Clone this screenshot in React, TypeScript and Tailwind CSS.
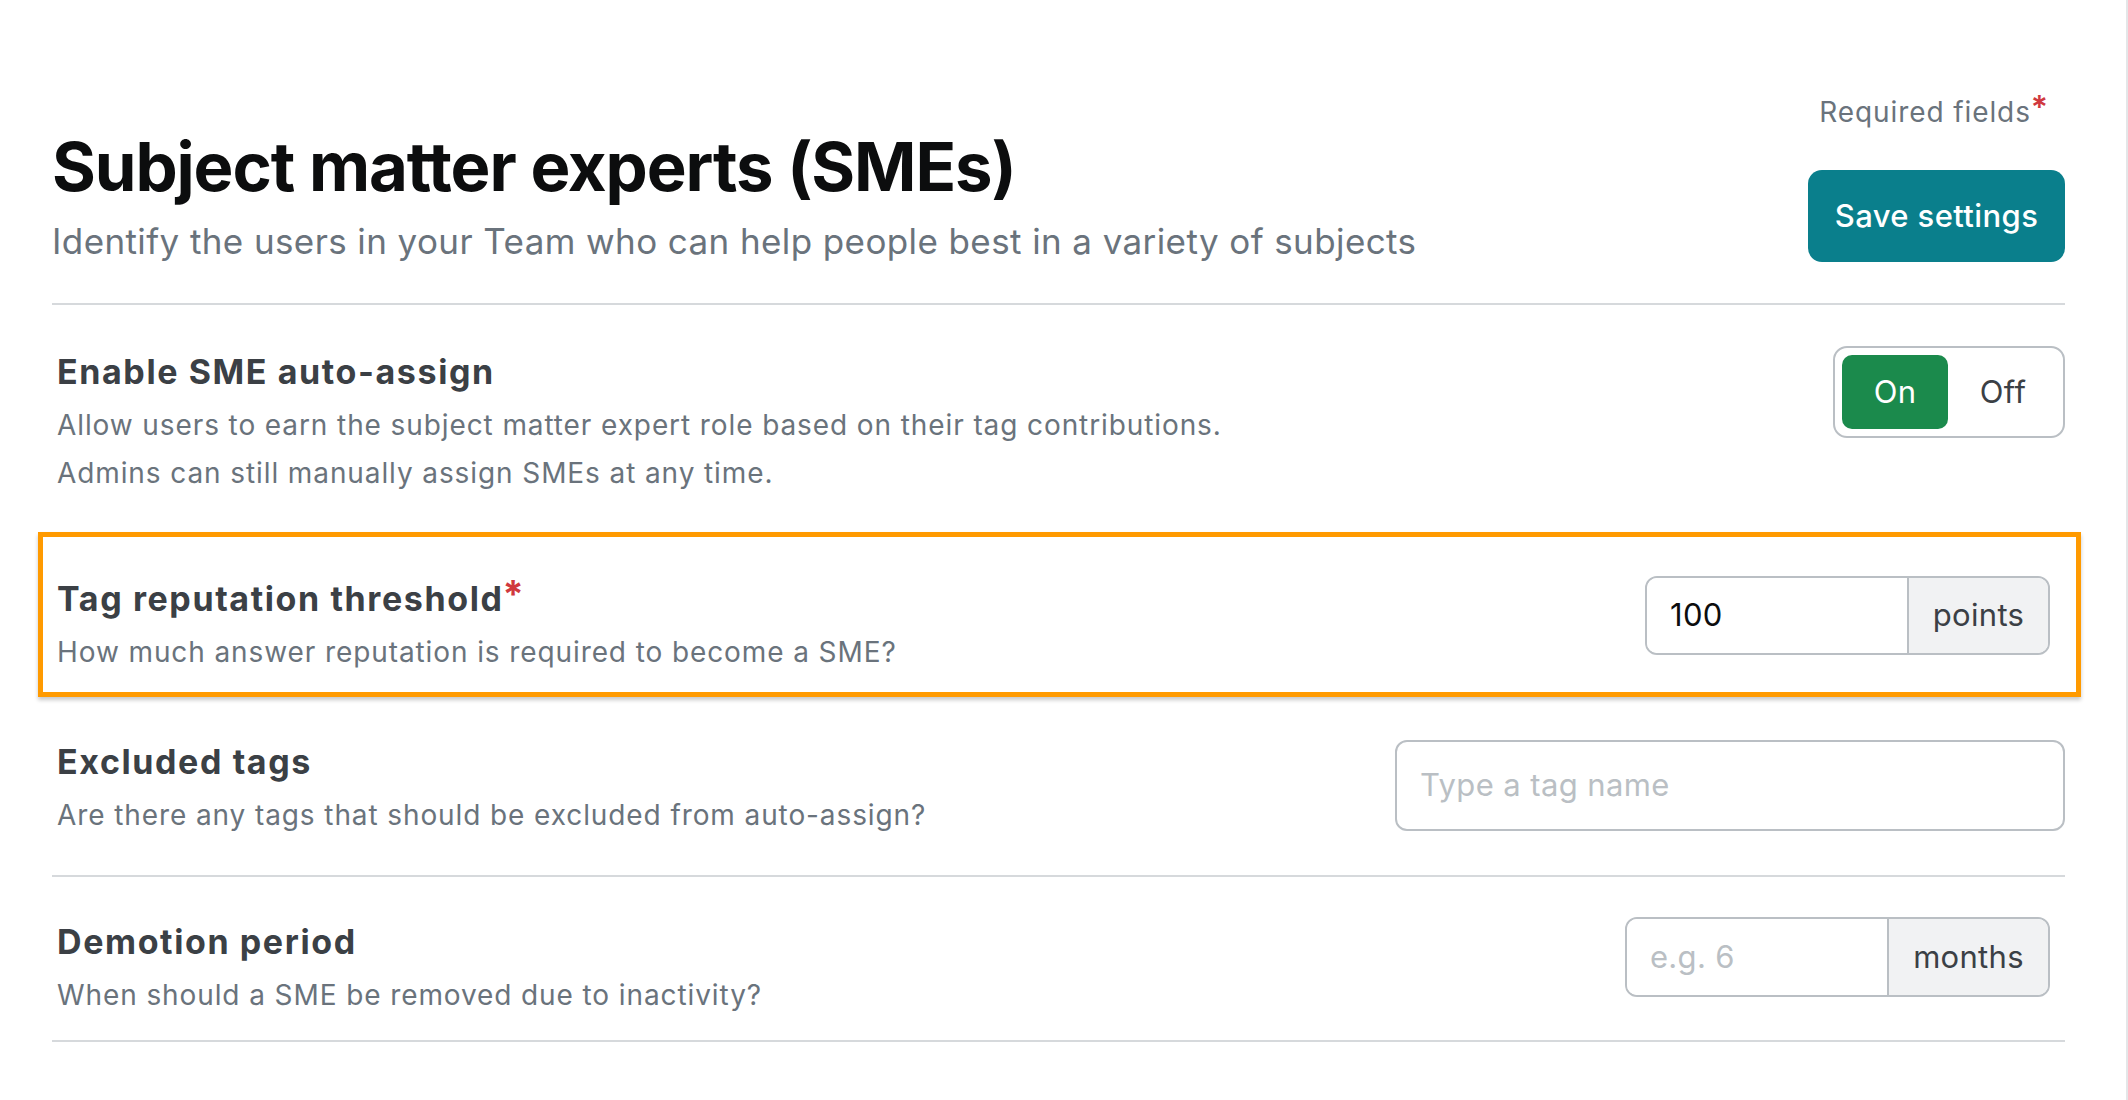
import React from "react";

const font = { fontFamily: "Inter, 'Noto Sans', sans-serif" };

function Heading({ children, required }: { children: React.ReactNode; required?: boolean }) {
  return (
    <h2 className="text-[34px] leading-[40px] font-bold text-[#3b4045] tracking-[1.6px]">
      {children}
      {required && <span className="text-[#d0393e] align-top text-[38px] leading-[30px] ml-[-1px]">*</span>}
    </h2>
  );
}

function Desc({ children, className = "" }: { children: React.ReactNode; className?: string }) {
  return <p className={"text-[28px] leading-[36px] tracking-[0.9px] text-[#6a737c] " + className}>{children}</p>;
}

export default function App() {
  return (
    <div className="min-h-screen w-full bg-white border-r-2 border-[#e4e6e8]" style={font}>
      <div className="pl-[52px] pr-[61px]">
        {/* Header */}
        <div className="flex justify-between items-end border-b-2 border-[#d6d9dc] pb-[41px]">
          <div className="flex flex-col">
            <h1 className="text-[67px] leading-[80px] font-bold text-[#0c0d0e] tracking-[-1.1px]">
              Subject matter experts (SMEs)
            </h1>
            <p className="mt-[13px] text-[35px] leading-[42px] tracking-[0.4px] text-[#6a737c]">
              Identify the users in your Team who can help people best in a variety of subjects
            </p>
          </div>
          <div className="flex flex-col items-end pt-[95px]">
            <div className="mr-[16px] text-[28px] leading-[34px] tracking-[0.9px] text-[#6a737c]">
              Required fields<span className="text-[#d0393e] align-top text-[32px] leading-[26px] font-semibold">*</span>
            </div>
            <button className="mt-[41px] h-[92px] w-[257px] rounded-[14px] bg-[#0a7f8c] text-white text-[31px] tracking-[0.4px] font-medium">
              Save settings
            </button>
          </div>
        </div>

        {/* Row 1 */}
        <div className="flex items-start justify-between pl-[5px] pt-[41px] pb-[41px]">
          <div className="pt-[6px]">
            <Heading>Enable SME auto-assign</Heading>
            <Desc className="mt-[15px]">
              Allow users to earn the subject matter expert role based on their tag contributions.
            </Desc>
            <Desc className="mt-[12px]">Admins can still manually assign SMEs at any time.</Desc>
          </div>
          <div className="flex gap-[2px] h-[92px] w-[232px] rounded-[14px] border-2 border-[#babfc4] p-[7px]">
            <div className="flex-1 rounded-[10px] bg-[#1b8a4c] text-white text-[31px] tracking-[0.3px] flex items-center justify-center">
              On
            </div>
            <div className="flex-1 rounded-[10px] text-[#3b4045] text-[31px] tracking-[0.3px] flex items-center justify-center">
              Off
            </div>
          </div>
        </div>

        {/* Row 2 highlighted */}
        <div className="-ml-[14px] -mr-[16px] border-[5px] border-[#ff9a00] shadow-[0_3px_4px_rgba(0,0,0,0.22)] pl-[9px] pr-[26px] pt-[39px] pb-[22px] flex items-start justify-between">
          <div className="pl-[5px] pt-[3px]">
            <Heading required>Tag reputation threshold</Heading>
            <Desc className="mt-[15px]">How much answer reputation is required to become a SME?</Desc>
          </div>
          <div className="flex h-[79px] rounded-[12px] border-2 border-[#babfc4] overflow-hidden">
            <div className="w-[260px] flex items-center pl-[23px] text-[31px] tracking-[0.3px] text-[#0c0d0e] bg-white">100</div>
            <div className="w-[141px] border-l-2 border-[#babfc4] bg-[#f1f2f3] flex items-center justify-center text-[31px] tracking-[0.3px] text-[#3b4045]">
              points
            </div>
          </div>
        </div>

        {/* Row 3 */}
        <div className="flex items-start justify-between pl-[5px] pt-[43px] pb-[42px] border-b-2 border-[#d6d9dc]">
          <div className="pt-[2px]">
            <Heading>Excluded tags</Heading>
            <Desc className="mt-[15px]">Are there any tags that should be excluded from auto-assign?</Desc>
          </div>
          <div className="h-[91px] w-[670px] rounded-[12px] border-2 border-[#babfc4] flex items-center pl-[23px] text-[31px] tracking-[0.4px] text-[#babfc4]">
            Type a tag name
          </div>
        </div>

        {/* Row 4 */}
        <div className="flex items-start justify-between pl-[5px] pt-[40px] pb-[27px] border-b-2 border-[#d6d9dc]">
          <div className="pt-[5px]">
            <Heading>Demotion period</Heading>
            <Desc className="mt-[15px]">When should a SME be removed due to inactivity?</Desc>
          </div>
          <div className="mr-[15px] flex h-[80px] rounded-[12px] border-2 border-[#babfc4] overflow-hidden">
            <div className="w-[260px] flex items-center pl-[23px] text-[31px] tracking-[0.3px] text-[#babfc4] bg-white">e.g. 6</div>
            <div className="w-[161px] border-l-2 border-[#babfc4] bg-[#f1f2f3] flex items-center justify-center text-[31px] tracking-[0.3px] text-[#3b4045]">
              months
            </div>
          </div>
        </div>
      </div>
    </div>
  );
}
